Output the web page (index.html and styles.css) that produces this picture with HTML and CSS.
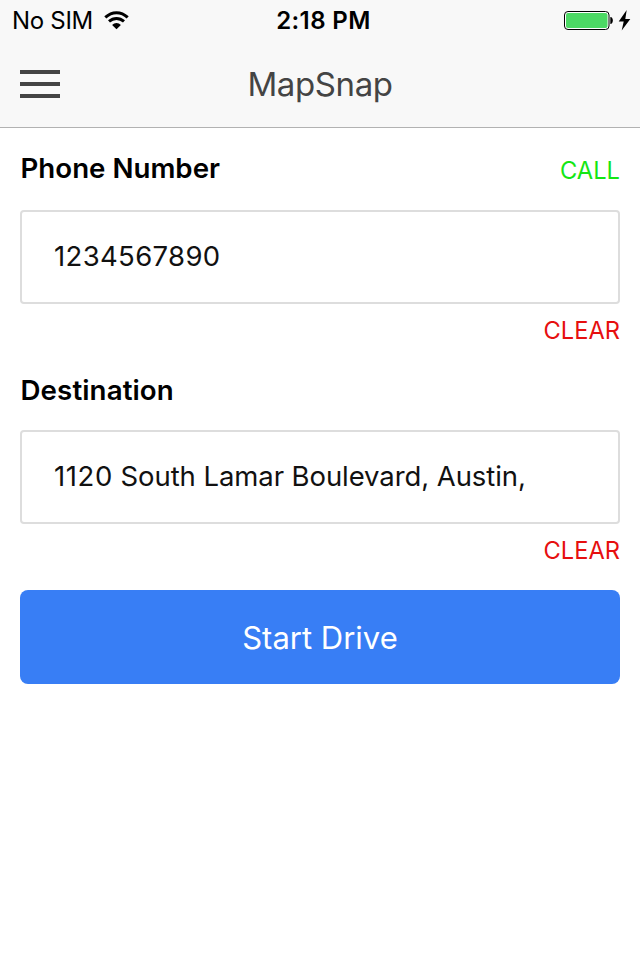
FILE: index.html
```html
<!DOCTYPE html>
<html lang="en">
<head>
<meta charset="utf-8">
<title>MapSnap</title>
<link rel="stylesheet" href="styles.css">
</head>
<body>
<header class="header">
  <div class="status">
    <div class="carrier"><span class="sim">No SIM</span>
      <svg class="wifi" width="25" height="19" viewBox="0 0 25 19"><g fill="none" stroke="#000" stroke-width="3"><path d="M1.3 6.4C8 .1 17 .1 23.7 6.4"/><path d="M5 10.4C9.5 6.4 15.5 6.4 20 10.4"/></g><path d="M8.1 14C10.6 11.3 14.4 11.3 16.9 14L12.5 18.2Z"/></svg>
    </div>
    <span class="time">2:18 PM</span>
    <svg class="battery" width="68" height="21" viewBox="0 0 68 21"><rect x=".5" y="1.5" width="44.5" height="18" rx="3.5" fill="#fff" stroke="#000"/><rect x="2" y="3" width="41.5" height="15" rx="2" fill="#4cd964"/><path d="M46.3 7c3.4 0 3.4 7 0 7z"/><path d="M62.7 0L54.7 11.5h5l-2 9L66.3 9h-5z"/></svg>
  </div>
  <div class="navbar">
    <div class="menu"><i></i><i></i><i></i></div>
    <h1 class="title">MapSnap</h1>
  </div>
</header>
<main class="content">
  <div class="row"><label class="label phone">Phone Number</label><a class="link call">CALL</a></div>
  <div class="field"><span class="number">1234567890</span></div>
  <div class="clear-row"><a class="link clear">CLEAR</a></div>
  <div class="row second"><label class="label dest">Destination</label></div>
  <div class="field"><span class="address"><span class="house">1120</span> South Lamar Boulevard, Austin,</span></div>
  <div class="clear-row"><a class="link clear">CLEAR</a></div>
  <button class="start"><span>Start Drive</span></button>
</main>
</body>
</html>
```
FILE: styles.css
```css
* { box-sizing: border-box; }
body { margin: 0; height: 960px; overflow: hidden; background: #fff; color: #000; font-family: Inter, sans-serif; }
.header { height: 128px; background: #f8f8f8; border-bottom: 1px solid #b2b2b2; }
.status { height: 40px; display: grid; grid-template-columns: 1fr auto 1fr; align-items: center; padding: 0 8px 0 12px; }
.carrier { display: flex; align-items: center; gap: 11px; font-size: 24px; letter-spacing: -.3px; padding-top: 1px; }
.time { font-size: 24px; font-weight: 600; letter-spacing: .4px; padding: 1px 0 0 3px; }
.battery { justify-self: end; }
.navbar { height: 88px; display: grid; grid-template-columns: 40px 1fr 40px; align-items: center; padding: 0 20px; }
.menu { display: flex; flex-direction: column; gap: 8px; }
.menu i { height: 4px; background: #444; }
.title { margin: 0; text-align: center; font-size: 33px; font-weight: 400; letter-spacing: -.4px; color: #444; }
.content { padding: 0 20px; }
.row { height: 82px; display: flex; justify-content: space-between; align-items: center; }
.second { height: 80px; }
.label { font-size: 27.7px; font-weight: 600; }
.phone { padding: 0 0 2px .5px; }
.dest { padding: 0 0 1px .5px; letter-spacing: .1px; }
.link { font-size: 23.7px; }
.call { color: #14e614; padding-top: 2px; }
.clear { color: #e60f0f; }
.field { height: 94px; border: 2px solid #ddd; border-radius: 4px; display: flex; align-items: center; padding: 0 32px 2px; font-size: 27.5px; color: #111; }
.number { letter-spacing: .35px; }
.address { letter-spacing: -.08px; }
.house { letter-spacing: .6px; }
.clear-row { height: 46px; display: flex; justify-content: flex-end; align-items: center; padding-top: 6px; }
.start { display: block; width: 100%; height: 94px; margin-top: 20px; border: 0; border-radius: 8px; background: #387ef5; color: #fff; font: 400 31px Inter, sans-serif; letter-spacing: 0; padding: 0; }
```
